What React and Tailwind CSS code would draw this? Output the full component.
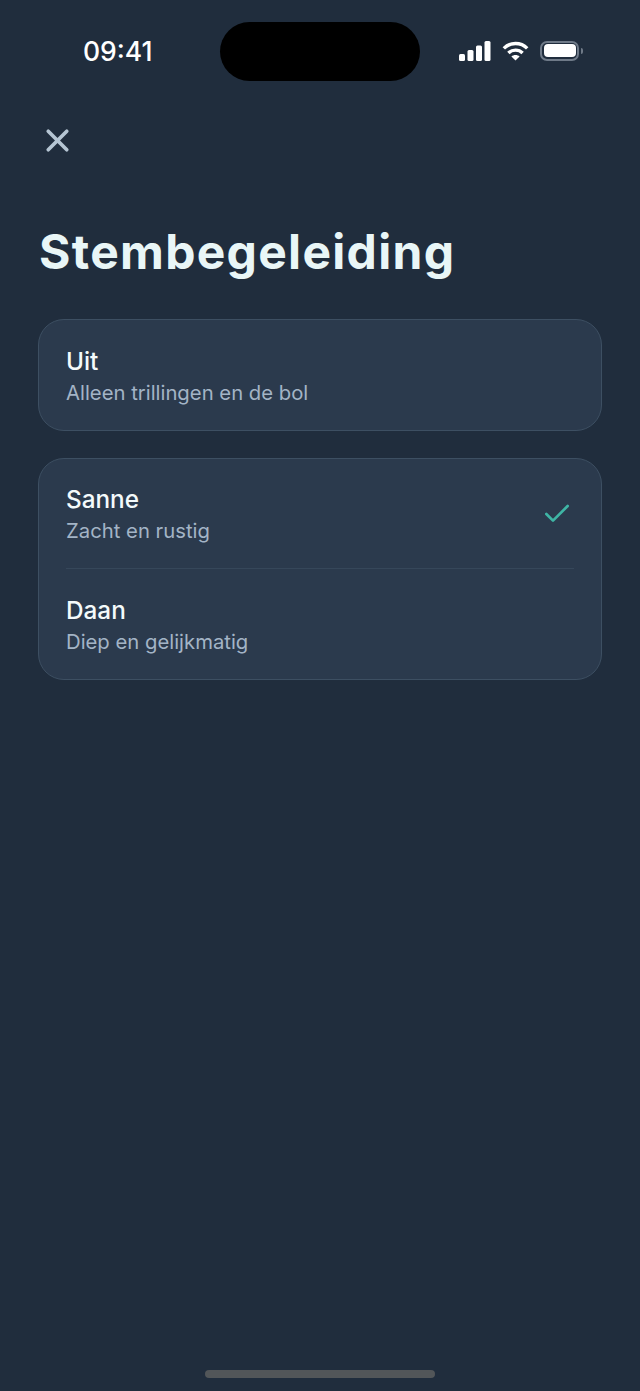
import { X, Check } from 'lucide-react';

function StatusBar() {
  return (
    <div className="flex items-center h-[59px] mt-[22px] pl-[83px] pr-[57px]">
      <span className="w-[137px] text-[26.5px] leading-none font-[550] text-white">09:41</span>
      <div className="w-[200px] h-[59px] rounded-full bg-black" />
      <div className="flex items-center ml-auto -mt-[2px]">
        {/* signal */}
        <svg className="ml-[1px]" width="32" height="20" viewBox="0 0 32 20" fill="white">
          <rect x="0" y="13" width="6" height="7" rx="1.5" />
          <rect x="8.5" y="9" width="6" height="11" rx="1.5" />
          <rect x="17" y="4.5" width="6" height="15.5" rx="1.5" />
          <rect x="25.5" y="0" width="6" height="20" rx="1.5" />
        </svg>
        {/* wifi */}
        <svg className="ml-[11px]" width="27" height="20" viewBox="0 0 27 20" fill="none" stroke="white" strokeWidth="3.4">
          <path d="M1.8 7.4C8.2 0.9 18.8 0.9 25.2 7.4" />
          <path d="M6.4 12C10.2 8.2 16.8 8.2 20.6 12" />
          <path d="M13.5 19.6L9.4 15.6C11.6 13.6 15.4 13.6 17.6 15.6Z" fill="white" stroke="none" />
        </svg>
        {/* battery */}
        <div className="ml-[11px] flex items-center">
          <div className="w-[39px] h-[20px] rounded-[7px] border-2 border-[#6f7a88] p-[1.5px]">
            <div className="w-full h-full rounded-[4px] bg-white" />
          </div>
          <div className="ml-[2px] w-[2px] h-[6px] rounded-r-full bg-[#6f7a88]" />
        </div>
      </div>
    </div>
  );
}

function Option({ title, subtitle, selected }) {
  return (
    <div className="flex items-center justify-between h-[110px] pt-[3px]">
      <div className="flex flex-col">
        <span className="text-[24.3px] leading-[31px] font-medium text-[#f4fafb]">{title}</span>
        <span className="text-[20.3px] leading-[31px] text-[#a3b4c6]">{subtitle}</span>
      </div>
      {selected && <Check className="w-[32px] h-[32px] mr-[1px] -mt-[3px] text-[#3fb5a5]" strokeWidth={2} />}
    </div>
  );
}

export default function App() {
  return (
    <div className="relative flex flex-col h-[1391px] bg-[#202d3d] font-['Inter',sans-serif]">
      <StatusBar />

      <button className="ml-[39px] mt-[41px] w-[37px] h-[37px] flex items-center justify-center text-[#b5c5d3]">
        <X className="w-[37px] h-[37px]" strokeWidth={2.4} />
      </button>

      <h1 className="mt-[60px] ml-[39px] text-[48px] leading-[66px] font-bold tracking-[1.3px] text-[#e9f6f7]">
        Stembegeleiding
      </h1>

      <div className="mx-[38px] mt-[34px] flex flex-col gap-[27px]">
        <div className="px-[27px] rounded-[26px] border border-[#3d4f62] bg-[#2b3a4d]">
          <Option title="Uit" subtitle="Alleen trillingen en de bol" />
        </div>
        <div className="px-[27px] rounded-[26px] border border-[#3d4f62] bg-[#2b3a4d] divide-y divide-[#36475a]">
          <Option title="Sanne" subtitle="Zacht en rustig" selected />
          <Option title="Daan" subtitle="Diep en gelijkmatig" />
        </div>
      </div>

      <div className="mt-auto mb-[13px] mx-auto w-[230px] h-[8px] rounded-full bg-[#525659]" />
    </div>
  );
}
